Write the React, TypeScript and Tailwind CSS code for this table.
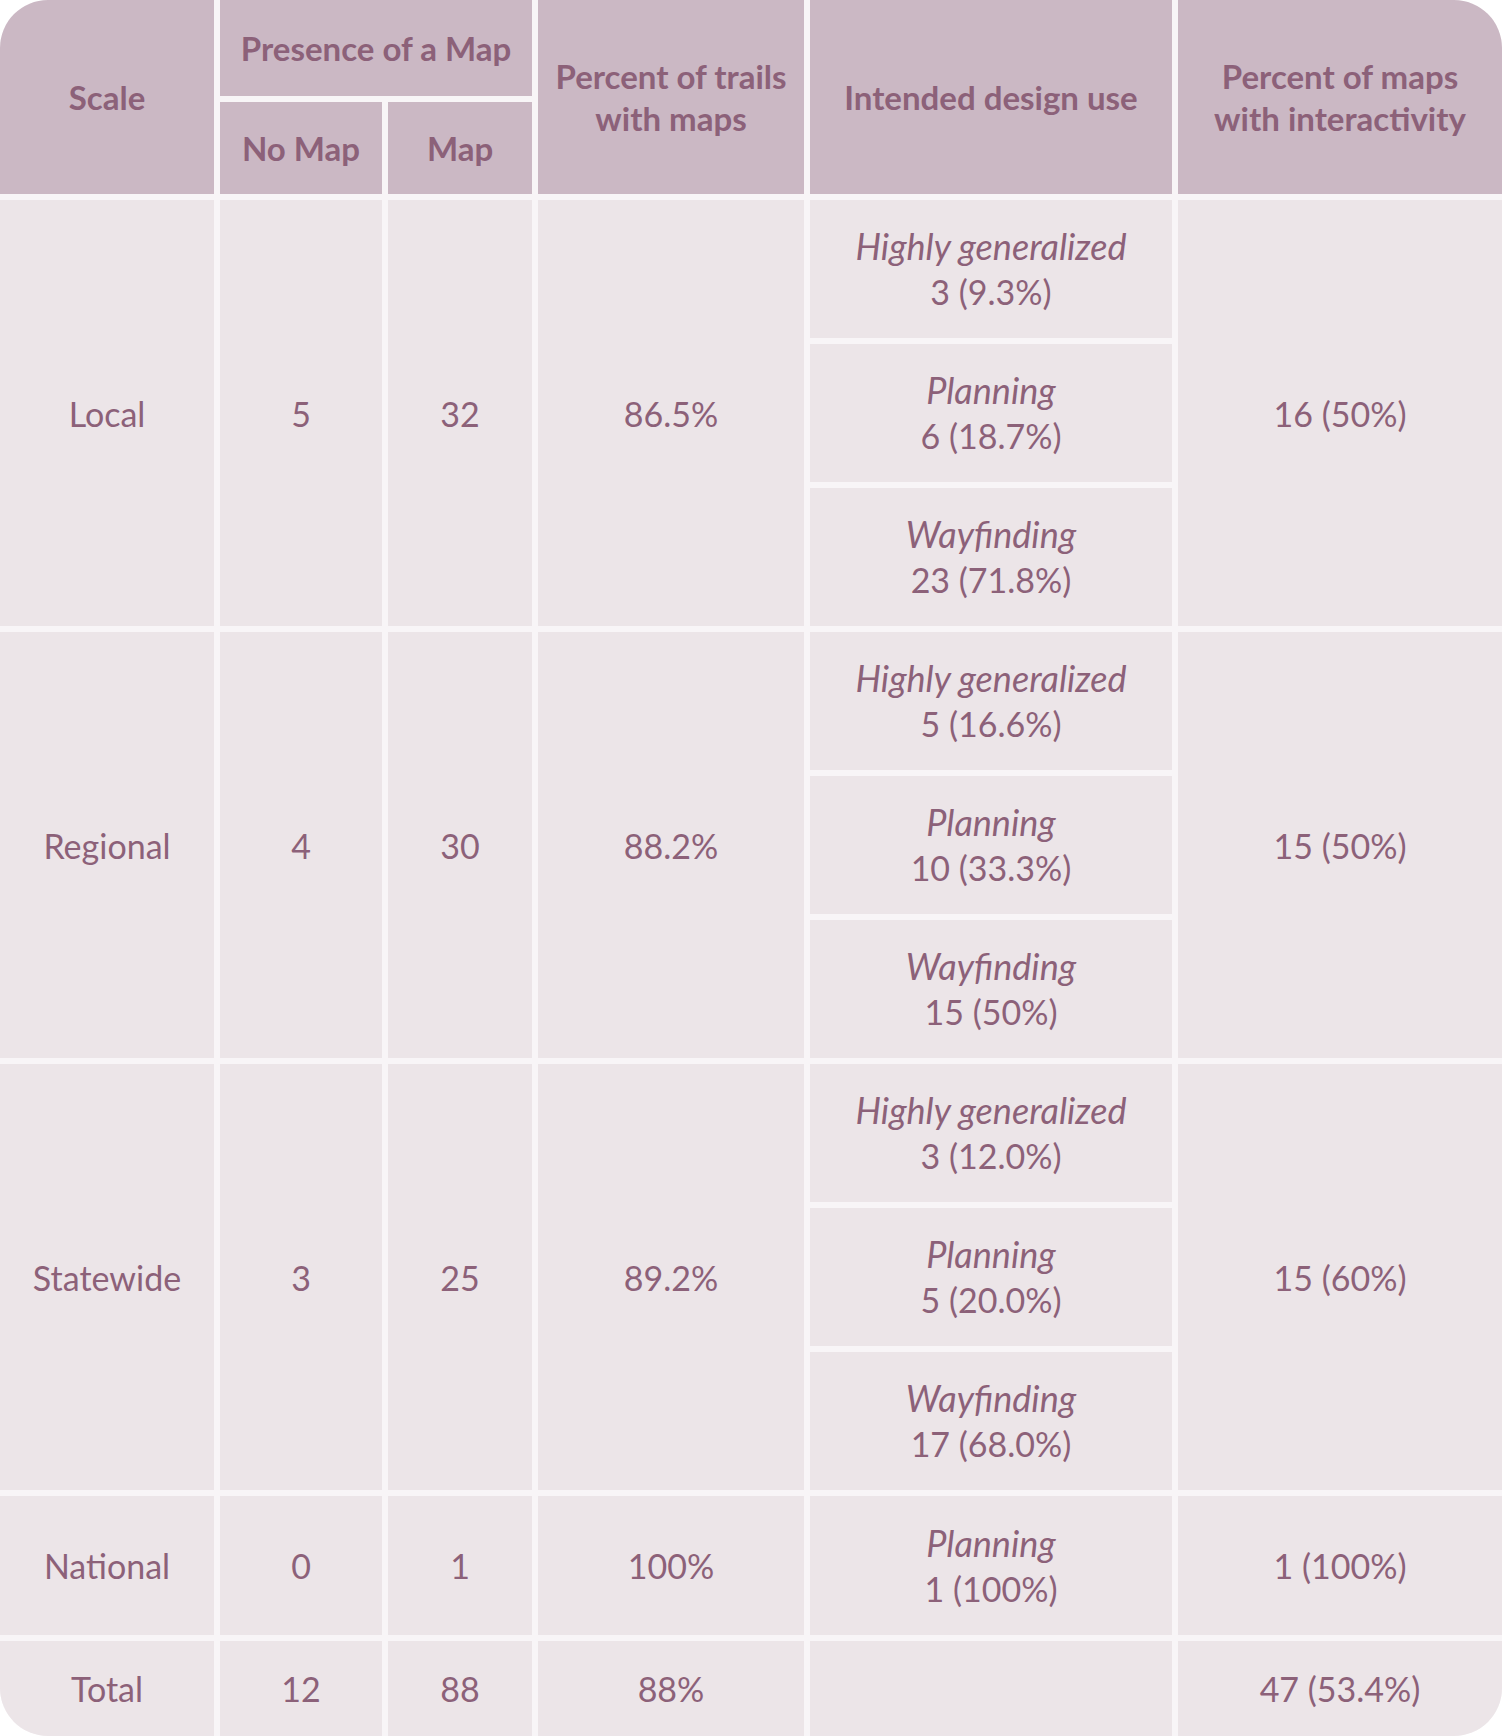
import React from "react";

const font = { fontFamily: "Lato, 'Noto Sans', sans-serif" };

type Use = { label: string; value: string };

type Group = {
  scale: string;
  noMap: string;
  map: string;
  pct: string;
  uses: Use[];
  inter: string;
};

const groups: Group[] = [
  {
    scale: "Local",
    noMap: "5",
    map: "32",
    pct: "86.5%",
    uses: [
      { label: "Highly generalized", value: "3 (9.3%)" },
      { label: "Planning", value: "6 (18.7%)" },
      { label: "Wayfinding", value: "23 (71.8%)" },
    ],
    inter: "16 (50%)",
  },
  {
    scale: "Regional",
    noMap: "4",
    map: "30",
    pct: "88.2%",
    uses: [
      { label: "Highly generalized", value: "5 (16.6%)" },
      { label: "Planning", value: "10 (33.3%)" },
      { label: "Wayfinding", value: "15 (50%)" },
    ],
    inter: "15 (50%)",
  },
  {
    scale: "Statewide",
    noMap: "3",
    map: "25",
    pct: "89.2%",
    uses: [
      { label: "Highly generalized", value: "3 (12.0%)" },
      { label: "Planning", value: "5 (20.0%)" },
      { label: "Wayfinding", value: "17 (68.0%)" },
    ],
    inter: "15 (60%)",
  },
];

function Head({ children, className = "" }: { children: React.ReactNode; className?: string }) {
  return (
    <div
      className={`flex items-center justify-center text-center bg-[#cbb8c4] text-[#8c6179] font-bold text-[33px] leading-[42px] ${className}`}
    >
      <div>{children}</div>
    </div>
  );
}

function Cell({ children, className = "" }: { children?: React.ReactNode; className?: string }) {
  return (
    <div
      className={`flex items-center justify-center text-center bg-[#ece5e8] text-[#8c6179] text-[34px] leading-[45px] ${className}`}
    >
      <div>{children}</div>
    </div>
  );
}

function UseCell({ u }: { u: Use }) {
  return (
    <Cell className="flex-1">
      <div className="italic text-[36px]">{u.label}</div>
      <div>{u.value}</div>
    </Cell>
  );
}

export default function App() {
  return (
    <div className="w-[1502px] h-[1736px] bg-white" style={font}>
      <div className="w-[1502px] h-[1736px] rounded-[48px] overflow-hidden bg-[#f8f5f7] grid gap-[6px] grid-cols-[214px_162px_144px_266px_362px_324px] grid-rows-[96px_92px_426px_426px_426px_139px_95px]">
        <Head className="row-span-2">Scale</Head>
        <Head className="col-span-2">Presence of a Map</Head>
        <Head className="row-span-2">
          Percent of trails
          <br />
          with maps
        </Head>
        <Head className="row-span-2">Intended design use</Head>
        <Head className="row-span-2">
          Percent of maps
          <br />
          with interactivity
        </Head>
        <Head>No Map</Head>
        <Head>Map</Head>

        {groups.map((g) => (
          <React.Fragment key={g.scale}>
            <Cell>{g.scale}</Cell>
            <Cell>{g.noMap}</Cell>
            <Cell>{g.map}</Cell>
            <Cell>{g.pct}</Cell>
            <div className="flex flex-col gap-[6px]">
              {g.uses.map((u) => (
                <UseCell key={u.label} u={u} />
              ))}
            </div>
            <Cell>{g.inter}</Cell>
          </React.Fragment>
        ))}

        <Cell>National</Cell>
        <Cell>0</Cell>
        <Cell>1</Cell>
        <Cell>100%</Cell>
        <Cell>
          <div className="italic text-[36px]">Planning</div>
          <div>1 (100%)</div>
        </Cell>
        <Cell>1 (100%)</Cell>

        <Cell>Total</Cell>
        <Cell>12</Cell>
        <Cell>88</Cell>
        <Cell>88%</Cell>
        <Cell />
        <Cell>47 (53.4%)</Cell>
      </div>
    </div>
  );
}
